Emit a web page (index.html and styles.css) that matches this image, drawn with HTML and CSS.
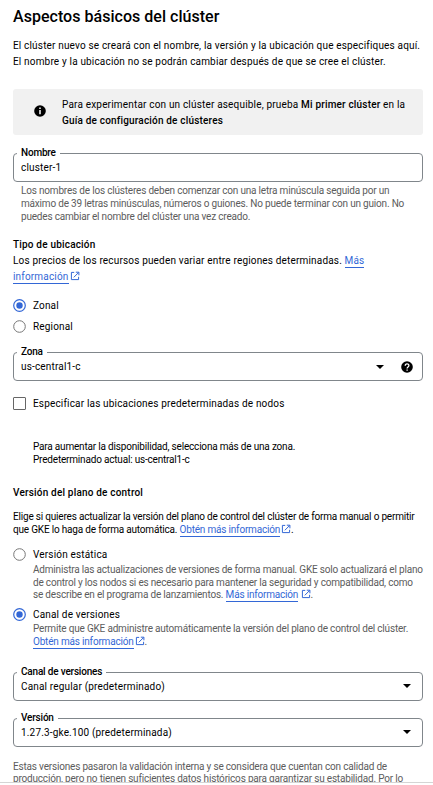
FILE: index.html
```html
<!DOCTYPE html>
<html lang="es">
<head>
<meta charset="utf-8">
<title>Aspectos básicos del clúster</title>
<link rel="stylesheet" href="styles.css">
</head>
<body>
<svg width="0" height="0" class="defs" aria-hidden="true">
  <symbol id="ext" viewBox="0 0 10 10"><path d="M4.2 1.4H1.4V8.6H8.6V5.8M5.8 1.2H8.9V4.3M8.6 1.5L3.8 6.3" fill="none" stroke="currentColor" stroke-width="1"/></symbol>
</svg>
<main class="page">
  <h1 class="title">Aspectos básicos del clúster</h1>
  <p class="intro">El clúster nuevo se creará con el nombre, la versión y la ubicación que especifiques aquí.<br>El nombre y la ubicación no se podrán cambiar después de que se cree el clúster.</p>

  <aside class="notice">
    <svg class="info" viewBox="0 0 12 12"><circle cx="6" cy="6" r="5.8"/><path d="M5.2 2.6h1.6v1.5H5.2zM5.2 5h1.6v4.2H5.2z" fill="#f1f1f1"/></svg>
    <p>Para experimentar con un clúster asequible, prueba <b>Mi primer clúster</b> en la<br><b>Guía de configuración de clústeres</b></p>
  </aside>

  <div class="field name"><span class="label">Nombre</span><span class="value">cluster-1</span></div>
  <p class="small hint">Los nombres de los clústeres deben comenzar con una letra minúscula seguida por un<br>máximo de 39 letras minúsculas, números o guiones. No puede terminar con un guion. No<br>puedes cambiar el nombre del clúster una vez creado.</p>

  <section class="location">
    <h2>Tipo de ubicación</h2>
    <p>Los precios de los recursos pueden variar entre regiones determinadas. <a>Más</a><br><a>información</a><svg class="ext"><use href="#ext"/></svg></p>
  </section>

  <div class="option zonal"><svg class="radio on" viewBox="0 0 13 13"><circle cx="6.5" cy="6.5" r="5.8"/><circle class="dot" cx="6.5" cy="6.5" r="3.2"/></svg><span>Zonal</span></div>
  <div class="option regional"><svg class="radio" viewBox="0 0 13 13"><circle cx="6.5" cy="6.5" r="5.8"/></svg><span>Regional</span></div>

  <div class="field zone"><span class="label">Zona</span><span class="value">us-central1-c</span><i class="caret"></i><svg class="help" viewBox="0 0 12 12"><circle cx="6" cy="6" r="5.8"/><path d="M4.2 4.8C4.2 2.2 7.9 2.3 7.9 4.6C7.9 6 6.1 6 6.1 7.5M6.1 8.5V9.8" fill="none" stroke="#fff" stroke-width="1.3"/></svg></div>

  <div class="option nodes"><i class="check"></i><span>Especificar las ubicaciones predeterminadas de nodos</span></div>
  <p class="small zones">Para aumentar la disponibilidad, selecciona más de una zona.<br>Predeterminado actual: us-central1-c</p>

  <h2 class="plane">Versión del plano de control</h2>
  <p class="small choose">Elige si quieres actualizar la versión del plano de control del clúster de forma manual o permitir<br>que GKE lo haga de forma automática. <a>Obtén más información</a><svg class="ext"><use href="#ext"/></svg>.</p>

  <div class="option static"><svg class="radio" viewBox="0 0 13 13"><circle cx="6.5" cy="6.5" r="5.8"/></svg><span>Versión estática</span></div>
  <p class="small desc static-desc">Administra las actualizaciones de versiones de forma manual. GKE solo actualizará el plano<br>de control y los nodos si es necesario para mantener la seguridad y compatibilidad, como<br>se describe en el programa de lanzamientos. <a>Más información</a> <svg class="ext snug"><use href="#ext"/></svg>.</p>

  <div class="option channel"><svg class="radio on" viewBox="0 0 13 13"><circle cx="6.5" cy="6.5" r="5.8"/><circle class="dot" cx="6.5" cy="6.5" r="3.2"/></svg><span>Canal de versiones</span></div>
  <p class="small desc channel-desc">Permite que GKE administre automáticamente la versión del plano de control del clúster.<br><a>Obtén más información</a><svg class="ext"><use href="#ext"/></svg>.</p>

  <div class="field release"><span class="label">Canal de versiones</span><span class="value">Canal regular (predeterminado)</span><i class="caret"></i></div>
  <div class="field version"><span class="label">Versión</span><span class="value">1.27.3-gke.100 (predeterminada)</span><i class="caret"></i></div>
  <p class="small tail">Estas versiones pasaron la validación interna y se considera que cuentan con calidad de<br>producción, pero no tienen suficientes datos históricos para garantizar su estabilidad. Por lo</p>
</main>
</body>
</html>
```
FILE: styles.css
```css
* { box-sizing: border-box; }
html { background: #fff; }
body { margin: 0; overflow: hidden; font: 400 10px/13px Roboto, sans-serif; letter-spacing: .17px; color: #000; }
p, h1, h2 { margin: 0; white-space: nowrap; }
b { font-weight: 500; }
a { color: #3367d6; border-bottom: 1px solid #3367d6; padding-bottom: 1px; }
.defs { position: absolute; }
.page { height: 783px; padding: 7px 10px 0 13px; overflow: hidden; border-bottom: 1px solid #d5d5d5; }
.title { font-size: 16px; line-height: 20px; font-weight: 500; letter-spacing: .03px; }
.intro { margin-top: 11px; line-height: 16px; }
.notice { display: flex; align-items: center; height: 46px; margin-top: 19px; padding: 2px 0 0 21px; background: #f1f1f1; border-radius: 3px; line-height: 16px; letter-spacing: .18px; }
.info { width: 12px; height: 12px; margin-right: 16px; margin-top: -4px; }
.small { letter-spacing: -.19px; }
.field { position: relative; display: flex; align-items: center; height: 29px; padding: 0 8px 0 7px; border: 1px solid #80868b; border-radius: 4px; }
.value { flex: 1; }
.label { position: absolute; left: 3px; top: -8px; padding: 0 4px; background: #fff; font-weight: 500; letter-spacing: -.19px; }
.caret { border: 4px solid transparent; border-top-color: #000; border-bottom: 0; margin-right: 3px; }
.help { width: 12px; height: 12px; margin-left: 14px; margin-right: 1px; }
.name { margin-top: 18px; }
.hint { margin: 2px 0 0 8px; color: #5c5c5c; }
.location { margin-top: 14px; line-height: 16px; }
h2 { font-size: 10px; font-weight: 500; line-height: inherit; letter-spacing: .19px; }
.ext { width: 10px; height: 10px; margin-left: 1px; vertical-align: -1px; color: #3367d6; }
.snug { margin-left: 0; }
.option { display: flex; align-items: center; height: 13px; gap: 7px; }
.radio { width: 13px; height: 13px; fill: none; stroke: #777; stroke-width: 1; }
.radio.on { stroke: #3367d6; stroke-width: 1.2; }
.radio .dot { fill: #3367d6; stroke: none; }
.zonal { margin-top: 14px; }
.regional { margin-top: 8px; }
.zone { margin-top: 19px; }
.nodes { margin-top: 16px; }
.check { width: 13px; height: 13px; border: 1px solid #666; border-radius: 1px; }
.zones { margin: 30px 0 0 20px; }
.plane { margin-top: 20px; }
.choose { margin-top: 11px; }
.static { margin-top: 12px; }
.desc { margin-left: 20px; color: #5c5c5c; }
.static-desc { margin-top: 3px; line-height: 12.6px; }
.channel { margin-top: 6px; }
.channel-desc { margin-top: 1px; }
.release { margin-top: 24px; }
.version { margin-top: 17px; }
.tail { margin-top: 14px; line-height: 12.5px; color: #5c5c5c; }
```
